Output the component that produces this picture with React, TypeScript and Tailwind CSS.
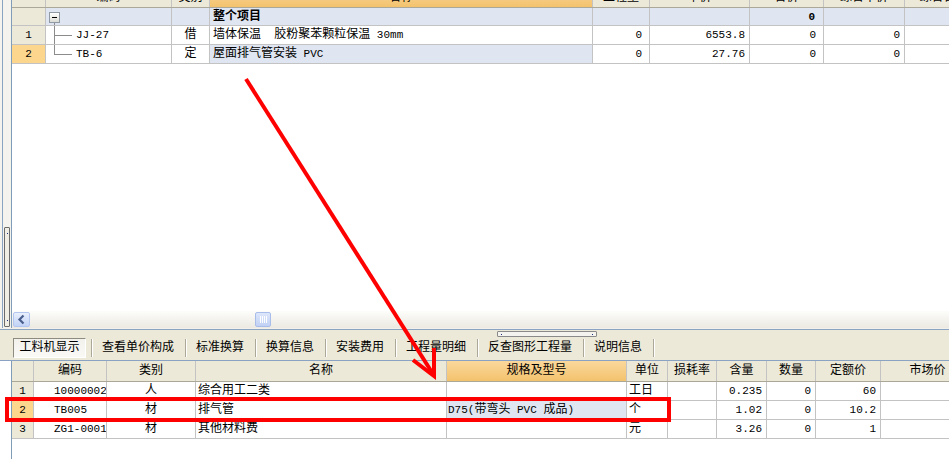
import React from 'react';

const F = "font-[family-name:'Liberation_Mono','Noto_Sans_CJK_SC',monospace]";

function Cell({ w, className = '', children }: { w: string; className?: string; children?: React.ReactNode }) {
  return (
    <div className={`${w} h-full shrink-0 flex items-center overflow-hidden whitespace-pre border-r border-[#c3c3c3] ${className}`}>
      {children}
    </div>
  );
}

const A = ({ children }: { children: React.ReactNode }) => <span className="text-[11px]">{children}</span>;

const topW = ['w-[34px]', 'w-[126px]', 'w-[38px]', 'w-[383px]', 'w-[57px]', 'w-[100px]', 'w-[74px]', 'w-[81px]', 'w-[78px]'];
const topHead = ['', '编码', '类别', '名称', '工程量', '单价', '合价', '综合单价', '综合合价'];

const lowW = ['w-[22px]', 'w-[73px]', 'w-[89px]', 'w-[251px]', 'w-[180px]', 'w-[41px]', 'w-[49px]', 'w-[50px]', 'w-[49px]', 'w-[65px]', 'w-[94px]'];
const lowHead = ['', '编码', '类别', '名称', '规格及型号', '单位', '损耗率', '含量', '数量', '定额价', '市场价'];

const ORANGE = 'bg-linear-to-b from-[#fad89c] to-[#f3c26c]';

type LowRow = { n: string; code: string; kind: string; name: string; spec: string; unit: string; qty: string; amount: string; price: string; sel?: boolean };

const lowRows: LowRow[] = [
  { n: '1', code: '10000002', kind: '人', name: '综合用工二类', spec: '', unit: '工日', qty: '0.235', amount: '0', price: '60' },
  { n: '2', code: 'TB005', kind: '材', name: '排气管', spec: 'D75(带弯头 PVC 成品)', unit: '个', qty: '1.02', amount: '0', price: '10.2', sel: true },
  { n: '3', code: 'ZG1-0001', kind: '材', name: '其他材料费', spec: '', unit: '元', qty: '3.26', amount: '0', price: '1' },
];

const tabs = ['查看单价构成', '标准换算', '换算信息', '安装费用', '工程量明细', '反查图形工程量', '说明信息'];

function TreeLink({ last }: { last?: boolean }) {
  return (
    <div className="h-full ml-[8px] w-[18px] flex flex-col">
      <div className="flex-1 border-l border-b border-[#8c8c8c]" />
      <div className={`flex-1 ${last ? '' : 'border-l border-[#8c8c8c]'}`} />
    </div>
  );
}

export default function App() {
  return (
    <div className={`relative w-[949px] h-[459px] overflow-hidden bg-white text-black text-[12px] leading-[14px] ${F}`}>
      {/* upper pane */}
      <div className="flex h-[328px]">
        <div className="w-[11px] flex shrink-0">
          <div className="w-[2px] bg-[#f4f3ee]" />
          <div className="w-px bg-[#8aa3c2]" />
          <div className="flex-1 bg-[#f4f3ee] flex flex-col justify-end pb-px pl-px">
            <div className="w-[6px] h-[100px] border border-[#6b6b6b] rounded-[1px] bg-[#efede4] flex flex-col items-center justify-between py-[5px]">
              <div className="w-px h-px bg-[#1a2c80]" />
              <div className="w-px h-px bg-[#1a2c80]" />
            </div>
          </div>
        </div>

        <div className="flex-1 min-w-0 flex flex-col border-l border-[#7f9db9] overflow-hidden">
          <div className="h-[8px] overflow-hidden shrink-0">
            <div className="-mt-[12px] flex h-[20px] border-b border-[#aca899]">
              {topHead.map((h, i) => (
                <Cell key={i} w={topW[i]} className={`justify-center ${i === 3 ? ORANGE : 'bg-[#ece9d8]'}`}>
                  {h}
                </Cell>
              ))}
            </div>
          </div>

          <div className="flex h-[18px] shrink-0 border-b border-[#c3c3c3] bg-[#dfe6f1]">
            <Cell w={topW[0]} className="bg-[#ece9d8]" />
            <Cell w={topW[1]} className="items-stretch">
              <div className="h-full flex flex-col pl-[3px]">
                <div className="mt-[4px] w-[11px] h-[11px] border border-[#8f9aa5] bg-linear-to-b from-white to-[#dcdcd6] flex items-center justify-center">
                  <div className="w-[5px] h-px bg-black" />
                </div>
                <div className="ml-[5px] w-px flex-1 bg-[#8c8c8c]" />
              </div>
            </Cell>
            <Cell w={topW[2]} />
            <Cell w={topW[3]} className="pl-[3px] font-bold">整个项目</Cell>
            <Cell w={topW[4]} />
            <Cell w={topW[5]} />
            <Cell w={topW[6]} className="justify-end pr-[8px] font-bold"><A>0</A></Cell>
            <Cell w={topW[7]} />
            <Cell w={topW[8]} />
          </div>

          <div className="flex h-[19px] shrink-0 border-b border-[#c3c3c3]">
            <Cell w={topW[0]} className="justify-center bg-[#ece9d8]"><A>1</A></Cell>
            <Cell w={topW[1]}>
              <TreeLink />
              <span className="ml-[4px] text-[11px]">JJ-27</span>
            </Cell>
            <Cell w={topW[2]} className="justify-center">借</Cell>
            <Cell w={topW[3]} className="pl-[3px]">墙体保温<A>  </A>胶粉聚苯颗粒保温<A> 30mm</A></Cell>
            <Cell w={topW[4]} className="justify-end pr-[7px]"><A>0</A></Cell>
            <Cell w={topW[5]} className="justify-end pr-[4px]"><A>6553.8</A></Cell>
            <Cell w={topW[6]} className="justify-end pr-[7px]"><A>0</A></Cell>
            <Cell w={topW[7]} className="justify-end pr-[4px]"><A>0</A></Cell>
            <Cell w={topW[8]} />
          </div>

          <div className="flex h-[19px] shrink-0 border-b border-[#c3c3c3]">
            <Cell w={topW[0]} className="justify-center bg-[#fdd68e]"><A>2</A></Cell>
            <Cell w={topW[1]}>
              <TreeLink last />
              <span className="ml-[4px] text-[11px]">TB-6</span>
            </Cell>
            <Cell w={topW[2]} className="justify-center">定</Cell>
            <Cell w={topW[3]} className="pl-[3px] bg-[#dfe6f1]">屋面排气管安装<A> PVC</A></Cell>
            <Cell w={topW[4]} className="justify-end pr-[7px]"><A>0</A></Cell>
            <Cell w={topW[5]} className="justify-end pr-[4px]"><A>27.76</A></Cell>
            <Cell w={topW[6]} className="justify-end pr-[7px]"><A>0</A></Cell>
            <Cell w={topW[7]} className="justify-end pr-[4px]"><A>0</A></Cell>
            <Cell w={topW[8]} />
          </div>

          <div className="flex-1" />

          {/* horizontal scrollbar */}
          <div className="h-[17px] shrink-0 flex items-center bg-linear-to-b from-[#fdfdfb] to-[#ebe9e1]">
            <div className="ml-px w-[17px] h-[15px] rounded-[2px] border border-[#b3c6f0] bg-linear-to-b from-[#e9f0fd] to-[#c2d3f7] flex items-center justify-center">
              <svg width="9" height="11" viewBox="0 0 9 11">
                <path d="M6.5 1.5 L2.5 5.5 L6.5 9.5" fill="none" stroke="#4b5f8e" strokeWidth="2.2" />
              </svg>
            </div>
            <div className="ml-[225px] w-[16px] h-[15px] rounded-[2px] border border-[#a9bdeb] bg-linear-to-b from-[#dde7fb] to-[#c1d1f5] flex items-center justify-center gap-px">
              <div className="w-px h-[7px] bg-white" />
              <div className="w-px h-[7px] bg-white" />
              <div className="w-px h-[7px] bg-white" />
              <div className="w-px h-[7px] bg-white" />
            </div>
          </div>
        </div>
      </div>
      <div className="h-px bg-[#f1f0ea]" />

      {/* tab strip */}
      <div className="h-[31px] border-t border-[#8aa3c2] bg-[#ece9d8] flex flex-col">
        <div className="mt-px ml-[497px] w-[100px] h-[6px] border border-[#8a8a8a] rounded-[1px] bg-[#f4f3ee] flex items-center justify-between px-[3px]">
          <div className="w-px h-px bg-[#1a2c80]" />
          <div className="w-px h-px bg-[#1a2c80]" />
        </div>
        <div className="h-[21px] flex items-center pl-[13px]">
          <div className="w-[73px] h-[20px] border border-t-[#8e8c80] border-l-[#8e8c80] border-b-white border-r-white bg-linear-to-b from-[#f2f1ec] to-[#faf9f6] flex items-center justify-center">
            工料机显示
          </div>
          <div className="w-[5px]" />
          {tabs.map((t) => (
            <div key={t} className="flex items-center h-full">
              <div className="flex h-[18px]">
                <div className="w-px bg-[#aca899]" />
                <div className="w-px bg-white" />
              </div>
              <div className="pl-[9px] pr-[11px]">{t}</div>
            </div>
          ))}
          <div className="flex h-[18px]">
            <div className="w-px bg-[#aca899]" />
            <div className="w-px bg-white" />
          </div>
        </div>
      </div>

      {/* lower pane */}
      <div className="flex h-[99px] border-t border-[#8aa3c2]">
        <div className="w-[11px] shrink-0 bg-white" />
        <div className="flex-1 min-w-0 border-l border-[#7f9db9] overflow-hidden flex flex-col">
          <div className="flex h-[21px] shrink-0 border-b border-[#aca899]">
            {lowHead.map((h, i) => (
              <Cell key={i} w={lowW[i]} className={`justify-center ${i === 4 ? ORANGE : 'bg-[#ece9d8]'}`}>
                {h}
              </Cell>
            ))}
          </div>
          {lowRows.map((r) => (
            <div key={r.n} className="flex h-[19px] shrink-0 border-b border-[#c3c3c3]">
              <Cell w={lowW[0]} className={`justify-center ${r.sel ? 'bg-[#fdd68e]' : 'bg-[#ece9d8]'}`}><A>{r.n}</A></Cell>
              <Cell w={lowW[1]} className="pl-[20px]"><A>{r.code}</A></Cell>
              <Cell w={lowW[2]} className="justify-center">{r.kind}</Cell>
              <Cell w={lowW[3]} className="pl-[2px]">{r.name}</Cell>
              <Cell w={lowW[4]} className={`pl-px ${r.sel ? 'bg-[#dfe6f1]' : ''}`}>
                {r.spec ? (
                  <>
                    <A>D75(</A>带弯头<A> PVC </A>成品<A>)</A>
                  </>
                ) : null}
              </Cell>
              <Cell w={lowW[5]} className="pl-[2px]">{r.unit}</Cell>
              <Cell w={lowW[6]} />
              <Cell w={lowW[7]} className="justify-end pr-[4px]"><A>{r.qty}</A></Cell>
              <Cell w={lowW[8]} className="justify-end pr-[4px]"><A>{r.amount}</A></Cell>
              <Cell w={lowW[9]} className="justify-end pr-[4px]"><A>{r.price}</A></Cell>
              <Cell w={lowW[10]} />
            </div>
          ))}
        </div>
      </div>

      {/* red annotations */}
      <svg className="absolute inset-0 pointer-events-none" width="949" height="459" viewBox="0 0 949 459">
        <line x1="246" y1="79" x2="433" y2="374" stroke="#ff0000" strokeWidth="4" />
        <polyline points="413,360 434,376 434,348" fill="none" stroke="#ff0000" strokeWidth="4" />
        <rect x="7" y="399" width="662" height="21" fill="none" stroke="#ff0000" strokeWidth="4" />
      </svg>
    </div>
  );
}
